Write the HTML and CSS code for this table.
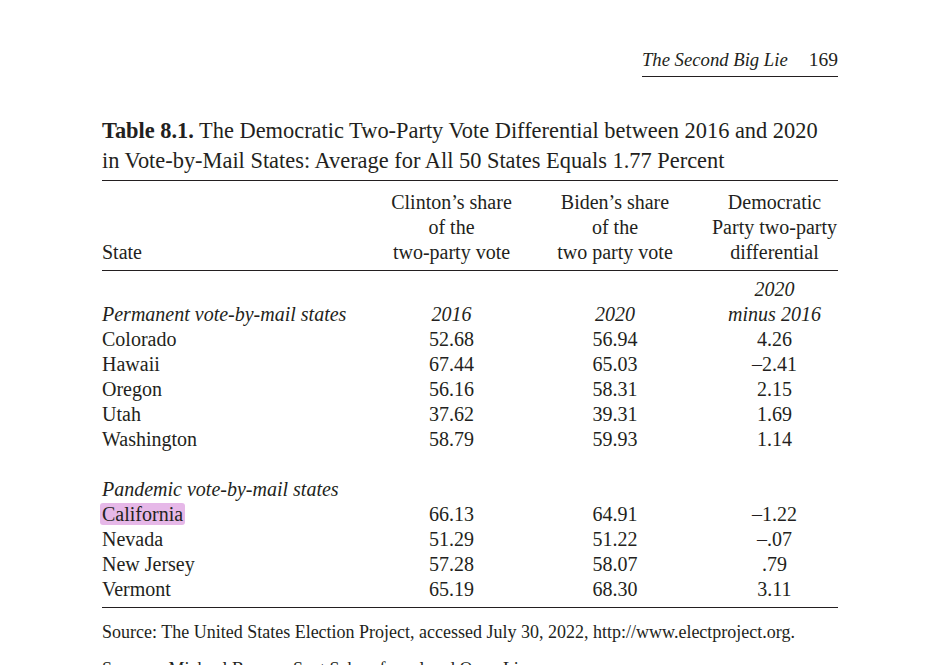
FILE: index.html
```html
<!DOCTYPE html>
<html lang="en">
<head>
  <meta charset="UTF-8" />
  <title>Table 8.1 – The Second Big Lie</title>
  <link rel="stylesheet" href="styles.css">
</head>
<body>
  <div class="page">
    <div class="running-head">
      <div class="running-inner">
        <span class="book-title">The Second Big Lie</span>
        <span class="page-num">169</span>
      </div>
    </div>

    <h2 class="caption"><b>Table 8.1.</b> The Democratic Two-Party Vote Differential between 2016 and 2020<br>in Vote-by-Mail States: Average for All 50 States Equals 1.77 Percent</h2>

    <!-- column headers -->
    <div class="grid head">
      <div class="c1 bottom">State</div>
      <div class="num">Clinton’s share<br>of the<br>two-party vote</div>
      <div class="num">Biden’s share<br>of the<br>two party vote</div>
      <div class="num">Democratic<br>Party two-party<br>differential</div>
    </div>

    <div class="grid body">
      <div></div><div></div><div></div><div class="num it">2020</div>
      <div class="it">Permanent vote-by-mail states</div><div class="num it">2016</div><div class="num it">2020</div><div class="num it">minus 2016</div>
      <div>Colorado</div><div class="num">52.68</div><div class="num">56.94</div><div class="num">4.26</div>
      <div>Hawaii</div><div class="num">67.44</div><div class="num">65.03</div><div class="num">–2.41</div>
      <div>Oregon</div><div class="num">56.16</div><div class="num">58.31</div><div class="num">2.15</div>
      <div>Utah</div><div class="num">37.62</div><div class="num">39.31</div><div class="num">1.69</div>
      <div>Washington</div><div class="num">58.79</div><div class="num">59.93</div><div class="num">1.14</div>
      <div class="gap"></div><div></div><div></div><div></div>
      <div class="it">Pandemic vote-by-mail states</div><div></div><div></div><div></div>
      <div><span class="mark">California</span></div><div class="num">66.13</div><div class="num">64.91</div><div class="num">–1.22</div>
      <div>Nevada</div><div class="num">51.29</div><div class="num">51.22</div><div class="num">–.07</div>
      <div>New Jersey</div><div class="num">57.28</div><div class="num">58.07</div><div class="num">.79</div>
      <div>Vermont</div><div class="num">65.19</div><div class="num">68.30</div><div class="num">3.11</div>
    </div>

    <p class="note">Source: The United States Election Project, accessed July 30, 2022, http://www.electproject.org.</p>
    <p class="note">Sources: Michael Barone, Scot Schraufnagel and Quan Li.</p>
  </div>
</body>
</html>
```

FILE: styles.css
```css
* {
  margin: 0;
  padding: 0;
  box-sizing: border-box;
}

body {
  background: #fff;
  color: #231f20;
  font-family: "Liberation Serif", "Times New Roman", serif;
  overflow: hidden;
}

.page {
  width: 838px;
  padding-left: 102px;
  height: 665px;
  overflow: hidden;
}

.running-head {
  display: flex;
  justify-content: flex-end;
  padding-top: 47px;
}

.running-inner {
  display: flex;
  gap: 21px;
  font-size: 19.5px;
  line-height: 25px;
  padding-bottom: 4px;
  border-bottom: 1px solid #231f20;
}

.book-title {
  font-style: italic;
  font-size: 18.7px;
}

.caption {
  font-weight: normal;
  font-size: 22.4px;
  line-height: 29.5px;
  margin-top: 39px;
  padding-bottom: 5px;
  border-bottom: 1.5px solid #231f20;
}

.caption b {
  font-weight: bold;
}

.grid {
  display: grid;
  grid-template-columns: 282px 135px 192px 127px;
  font-size: 20px;
  line-height: 25px;
}

.head {
  padding-top: 9px;
  padding-bottom: 5px;
  border-bottom: 1px solid #231f20;
}

.bottom {
  align-self: end;
}

.body {
  padding-top: 6px;
  padding-bottom: 5px;
  border-bottom: 1px solid #231f20;
}

.num {
  text-align: center;
}

.it {
  font-style: italic;
}

.gap {
  height: 25px;
}

.mark {
  background: #e6b8e8;
  border-radius: 3px;
  padding: 0 2px;
  margin-left: -2px;
}

.note {
  font-size: 18px;
  line-height: 20px;
  margin-top: 14px;
}

.note + .note {
  margin-top: 17px;
}
```
